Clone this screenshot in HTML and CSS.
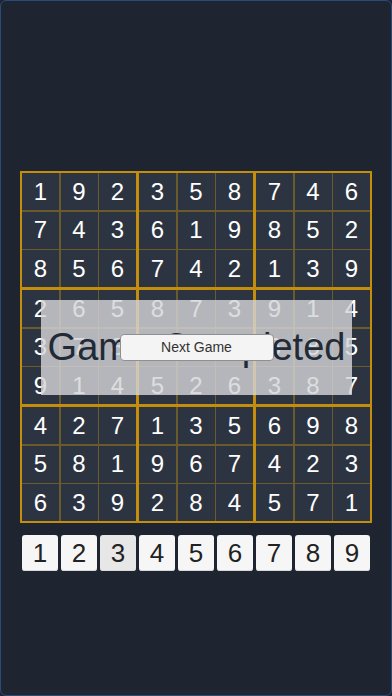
FILE: index.html
```html
<!DOCTYPE html>
<html>
<head>
<meta charset="utf-8">
<link rel="stylesheet" href="styles.css">
</head>
<body>
<div class="frame">
  <div class="board">
    <div class="block"><div class="cell">1</div><div class="cell">9</div><div class="cell">2</div><div class="cell">7</div><div class="cell">4</div><div class="cell">3</div><div class="cell">8</div><div class="cell">5</div><div class="cell">6</div></div>
    <div class="block"><div class="cell">3</div><div class="cell">5</div><div class="cell">8</div><div class="cell">6</div><div class="cell">1</div><div class="cell">9</div><div class="cell">7</div><div class="cell">4</div><div class="cell">2</div></div>
    <div class="block"><div class="cell">7</div><div class="cell">4</div><div class="cell">6</div><div class="cell">8</div><div class="cell">5</div><div class="cell">2</div><div class="cell">1</div><div class="cell">3</div><div class="cell">9</div></div>
    <div class="block"><div class="cell">2</div><div class="cell">6</div><div class="cell">5</div><div class="cell">3</div><div class="cell">7</div><div class="cell">8</div><div class="cell">9</div><div class="cell">1</div><div class="cell">4</div></div>
    <div class="block"><div class="cell">8</div><div class="cell">7</div><div class="cell">3</div><div class="cell">4</div><div class="cell">9</div><div class="cell">2</div><div class="cell">5</div><div class="cell">2</div><div class="cell">6</div></div>
    <div class="block"><div class="cell">9</div><div class="cell">1</div><div class="cell">4</div><div class="cell">6</div><div class="cell">8</div><div class="cell">5</div><div class="cell">3</div><div class="cell">8</div><div class="cell">7</div></div>
    <div class="block"><div class="cell">4</div><div class="cell">2</div><div class="cell">7</div><div class="cell">5</div><div class="cell">8</div><div class="cell">1</div><div class="cell">6</div><div class="cell">3</div><div class="cell">9</div></div>
    <div class="block"><div class="cell">1</div><div class="cell">3</div><div class="cell">5</div><div class="cell">9</div><div class="cell">6</div><div class="cell">7</div><div class="cell">2</div><div class="cell">8</div><div class="cell">4</div></div>
    <div class="block"><div class="cell">6</div><div class="cell">9</div><div class="cell">8</div><div class="cell">4</div><div class="cell">2</div><div class="cell">3</div><div class="cell">5</div><div class="cell">7</div><div class="cell">1</div></div>
    <div class="overlay">
      <div class="title">Game Completed</div>
      <div class="next">Next Game</div>
    </div>
  </div>
  <div class="pad">
    <div class="key">1</div><div class="key">2</div><div class="key key-active">3</div><div class="key">4</div><div class="key">5</div><div class="key">6</div><div class="key">7</div><div class="key">8</div><div class="key">9</div>
  </div>
</div>
</body>
</html>
```
FILE: styles.css
```css
html, body {
  margin: 0;
  padding: 0;
  background: #1f2530;
}
body {
  width: 392px;
  height: 696px;
  overflow: hidden;
  font-family: "Liberation Sans", Arial, sans-serif;
}
.frame {
  box-sizing: border-box;
  width: 392px;
  height: 696px;
  border: 1.5px solid #2b4a7c;
  border-radius: 6px;
  background: #1f2530;
  display: flex;
  flex-direction: column;
  align-items: center;
  padding-top: 169.5px;
}
.board {
  position: relative;
  display: grid;
  grid-template-columns: repeat(3, 114px);
  grid-template-rows: repeat(3, 114px);
  gap: 3px;
  padding: 2.5px 2px 2px 2px;
  background: #c48d0c;
}
.block {
  display: grid;
  grid-template-columns: repeat(3, 1fr);
  grid-template-rows: repeat(3, 1fr);
  gap: 1.5px;
  background: #6b5a2b;
}
.cell {
  background: #2d3441;
  color: #ffffff;
  font-size: 24px;
  display: flex;
  align-items: center;
  justify-content: center;
}
.overlay {
  position: absolute;
  left: 21px;
  top: 129px;
  width: 311px;
  height: 95px;
  background: rgba(212, 213, 215, 0.81);
  display: grid;
  place-items: center;
}
.title, .next {
  grid-area: 1 / 1;
}
.title {
  font-size: 38px;
  color: #222a36;
  white-space: nowrap;
}
.next {
  box-sizing: border-box;
  width: 154px;
  height: 27px;
  background: #f4f4f4;
  border: 1px solid #8f8f8f;
  border-radius: 4px;
  color: #333333;
  font-size: 14px;
  display: flex;
  align-items: center;
  justify-content: center;
}
.pad {
  display: flex;
  gap: 3px;
  margin-top: 12px;
}
.key {
  width: 36px;
  height: 36px;
  background: #f6f6f6;
  border-radius: 3px;
  color: #222222;
  font-size: 26px;
  display: flex;
  align-items: center;
  justify-content: center;
  box-shadow: inset 0 -1px 0 #d8d8d8;
}
.key-active {
  background: #e7e7e7;
}
```
